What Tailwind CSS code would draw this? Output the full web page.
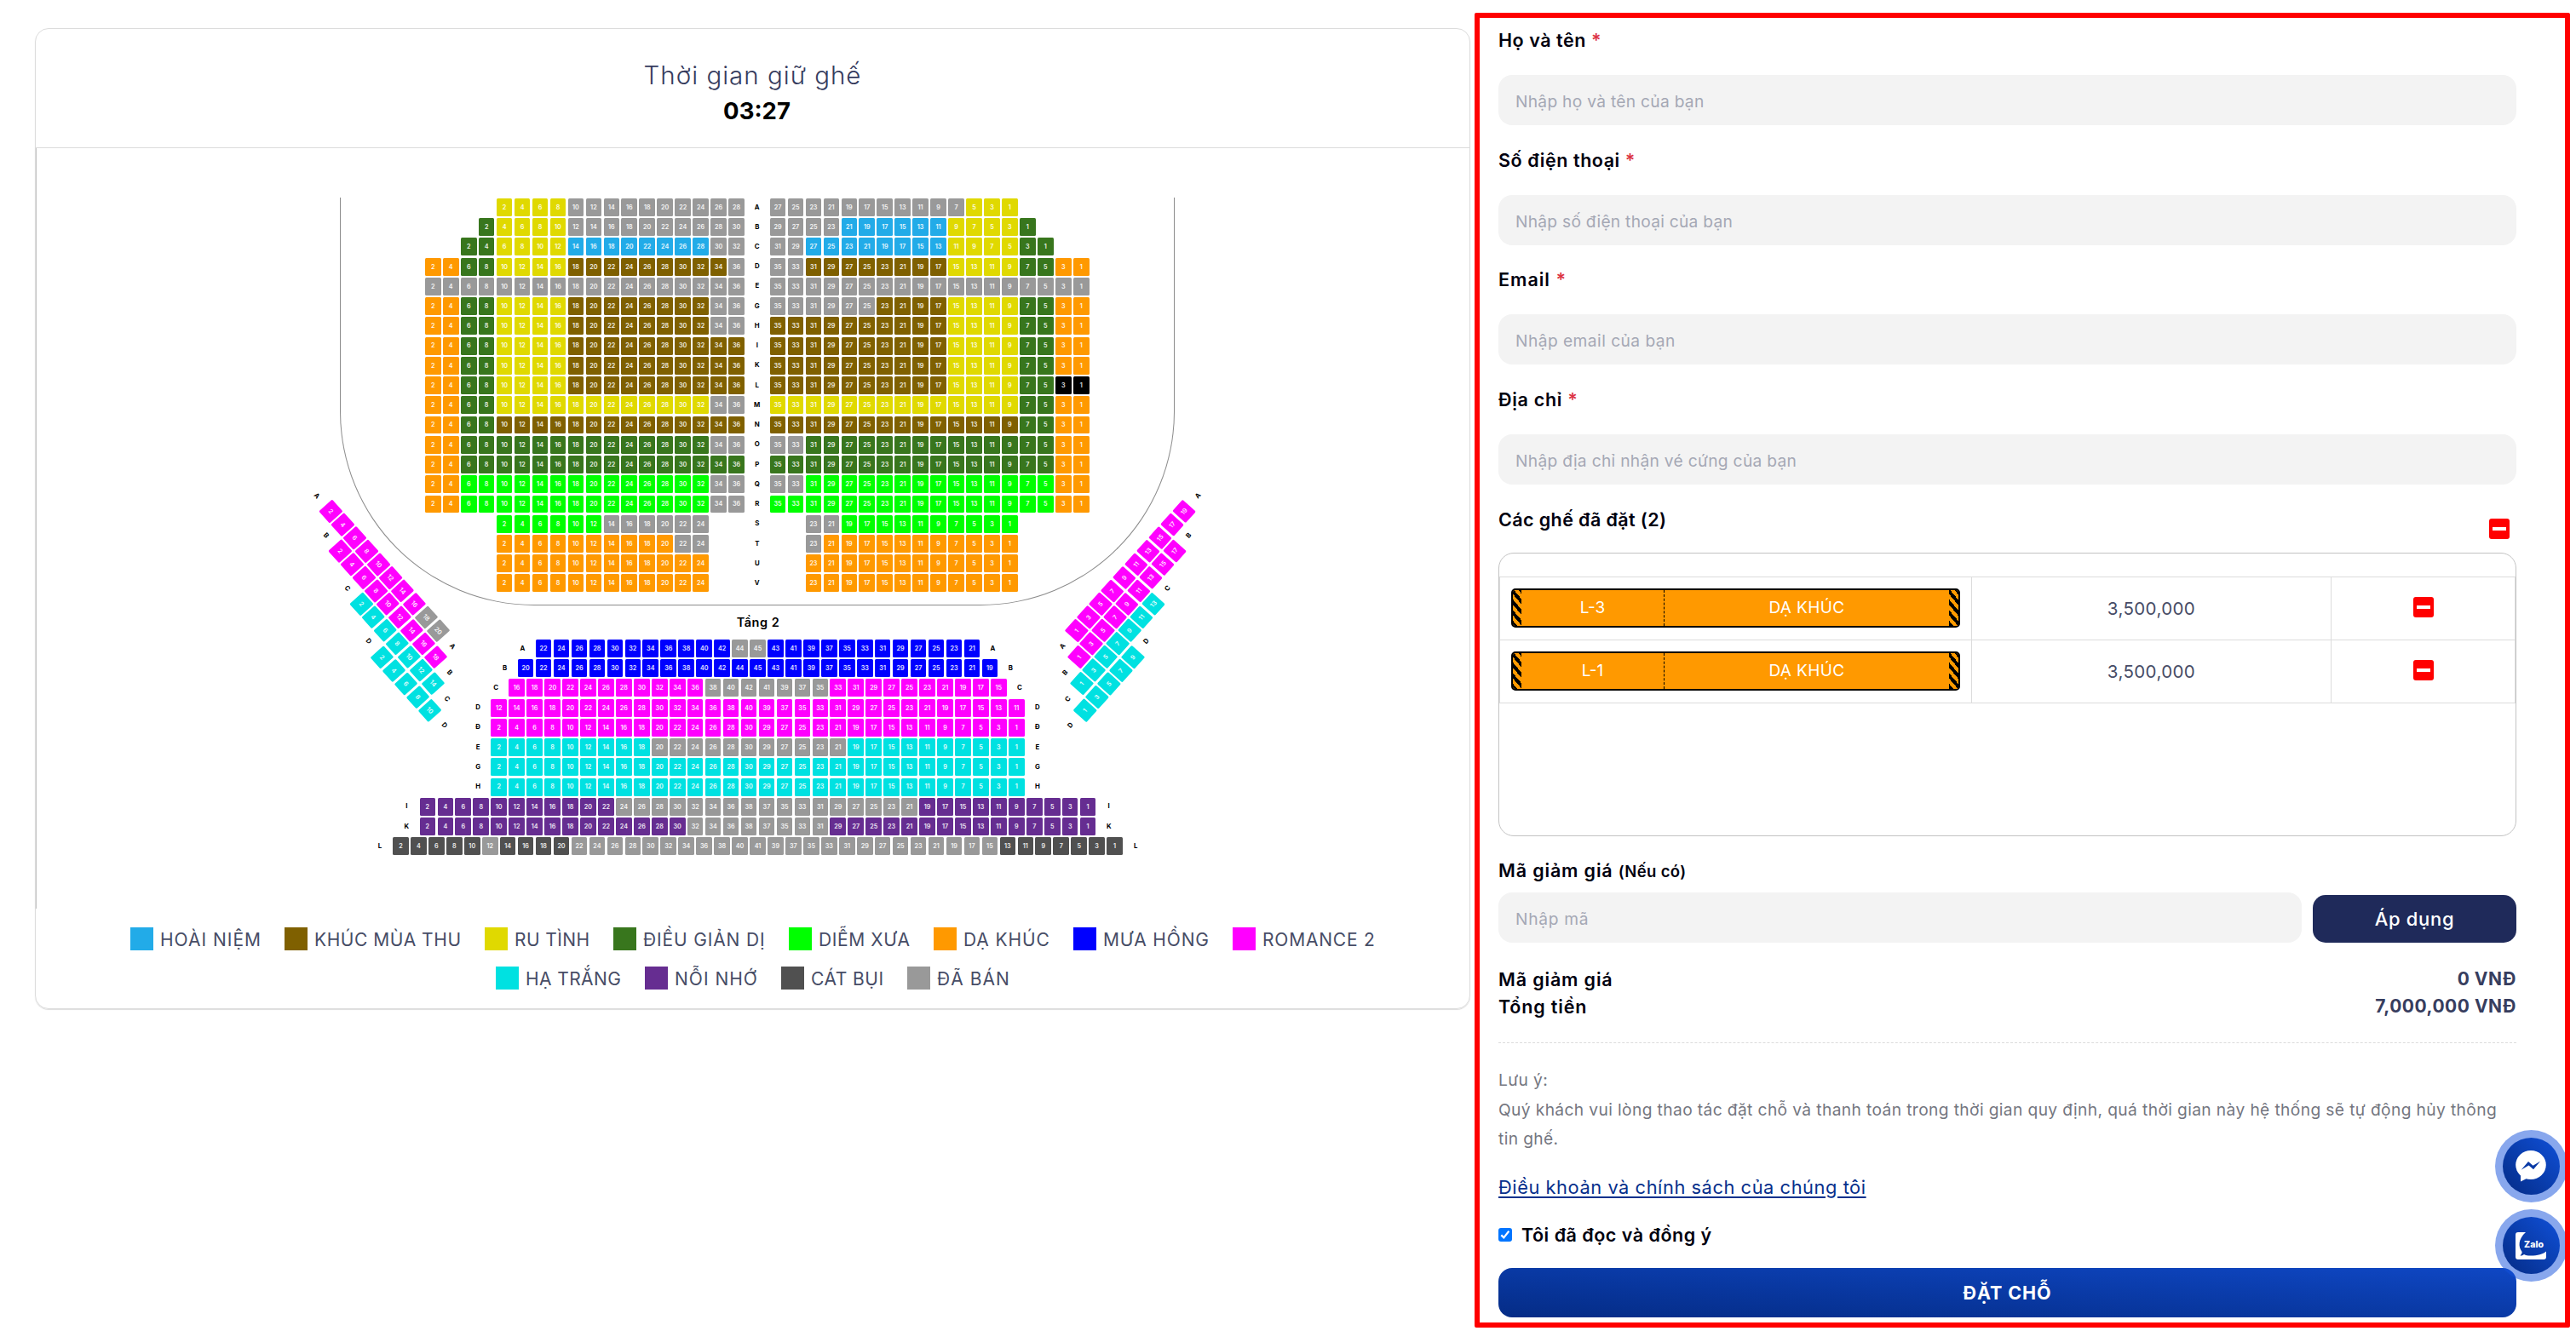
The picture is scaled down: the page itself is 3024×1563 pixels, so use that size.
<!DOCTYPE html>
<html lang="vi">
<head>
    <meta charset="UTF-8">
    <meta name="viewport" content="width=device-width, initial-scale=1.0">
    <title>Đặt chỗ</title>
    <script src="https://cdn.jsdelivr.net/npm/@tailwindcss/browser@4"></script>
</head>
<body class="relative flex h-[1563px] w-[3024px] items-start overflow-hidden bg-white font-['Inter','Noto_Sans',sans-serif] text-[#00000f]">

    <!-- Seat map card -->
    <section class="mt-[33px] ml-[41px] flex h-[1152px] w-[1685px] flex-col rounded-[16px] border border-[#dcdcdc] shadow-[0_1px_1px_#ddd]">
        <header class="flex h-[140px] flex-col items-center border-b border-[#dcdcdc] pt-[35px]">
            <h1 class="text-[29.5px] leading-[38px] font-light tracking-[1.02px] text-[#363c5e]">Thời gian giữ ghế</h1>
            <p class="mt-[4px] pl-[10px] text-[27.5px] leading-[38px] font-bold text-black">03:27</p>
        </header>

        <div id="seatMap" class="relative h-[893px] border-l border-[#c4c4c4]">
            <div class="absolute top-[58px] left-[356px] h-[479px] w-[980px] rounded-b-[228px] border border-t-0 border-[#8c8c8c]"></div>
            <div id="floor1" class="absolute top-[59px] left-[456px] flex flex-col gap-[2.35px]"></div>
            <div class="absolute top-[547px] left-[747px] w-[200px] text-center text-[14.5px] leading-[20px] font-semibold tracking-[0.5px] text-black">Tầng 2</div>
            <div id="floor2" class="absolute top-[577px] left-[346.5px] flex w-[1000px] flex-col items-center gap-[2.35px]"></div>
            <div id="wingLeft" class="absolute top-[416px] left-[308px] flex origin-[37.4px_10.4px] rotate-[48deg] flex-col gap-[2.35px]"></div>
            <div id="wingRight" class="absolute top-[416px] right-[298px] flex origin-[calc(100%-37.4px)_10.4px] rotate-[-48deg] flex-col items-end gap-[2.35px]"></div>
        </div>

        <!-- Legend -->
        <div class="mt-[22px] flex flex-col items-center gap-[19px] text-[21px] leading-[29px] whitespace-nowrap text-[#474d66]">
            <div class="flex h-[27px] gap-[28px]">
                <div class="flex gap-[8px]"><i class="size-[27px] bg-[#22abe8]"></i><span class="w-[118px] tracking-[1px]">HOÀI NIỆM</span></div>
                <div class="flex gap-[8px]"><i class="size-[27px] bg-[#7f6000]"></i><span class="w-[172px] tracking-[0.55px]">KHÚC MÙA THU</span></div>
                <div class="flex gap-[8px]"><i class="size-[27px] bg-[#e0d900]"></i><span class="w-[88px] tracking-[0.4px]">RU TÌNH</span></div>
                <div class="flex gap-[8px]"><i class="size-[27px] bg-[#38761d]"></i><span class="w-[143px] tracking-[0.85px]">ĐIỀU GIẢN DỊ</span></div>
                <div class="flex gap-[8px]"><i class="size-[27px] bg-[#00ff00]"></i><span class="w-[107px] tracking-[0.6px]">DIỄM XƯA</span></div>
                <div class="flex gap-[8px]"><i class="size-[27px] bg-[#ff9900]"></i><span class="w-[101px] tracking-[0.9px]">DẠ KHÚC</span></div>
                <div class="flex gap-[8px]"><i class="size-[27px] bg-[#0000ff]"></i><span class="w-[124px] tracking-[0.85px]">MƯA HỒNG</span></div>
                <div class="flex gap-[8px]"><i class="size-[27px] bg-[#ff00ff]"></i><span class="w-[132px] tracking-[0.8px]">ROMANCE 2</span></div>
            </div>
            <div class="flex h-[27px] gap-[28px]">
                <div class="flex gap-[8px]"><i class="size-[27px] bg-[#00e1e1]"></i><span class="w-[112px] tracking-[0.4px]">HẠ TRẮNG</span></div>
                <div class="flex gap-[8px]"><i class="size-[27px] bg-[#662d91]"></i><span class="w-[97px] tracking-[1px]">NỖI NHỚ</span></div>
                <div class="flex gap-[8px]"><i class="size-[27px] bg-[#505050]"></i><span class="w-[85px] tracking-[0.5px]">CÁT BỤI</span></div>
                <div class="flex gap-[8px]"><i class="size-[27px] bg-[#999999]"></i><span class="w-[85px] tracking-[1.05px]">ĐÃ BÁN</span></div>
            </div>
        </div>
    </section>

    <!-- Booking form -->
    <form class="mt-[35px] ml-[33px] w-[1195px] text-[21.5px] leading-[24px] tracking-[0.55px]">
        <div class="h-[140.67px]">
            <label class="block h-[24px] font-semibold">Họ và tên <span class="text-[#dc3545]">*</span></label>
            <input class="mt-[29px] h-[59px] w-full rounded-[16px] bg-[#f3f3f3] px-[20px] pt-[3px] text-[19.2px] tracking-[0.28px] placeholder:text-[#a5a8b5]" placeholder="Nhập họ và tên của bạn">
        </div>
        <div class="h-[140.67px]">
            <label class="block h-[24px] font-semibold">Số điện thoại <span class="text-[#dc3545]">*</span></label>
            <input class="mt-[29px] h-[59px] w-full rounded-[16px] bg-[#f3f3f3] px-[20px] pt-[3px] text-[19.2px] tracking-[0.26px] placeholder:text-[#a5a8b5]" placeholder="Nhập số điện thoại của bạn">
        </div>
        <div class="h-[140.67px]">
            <label class="block h-[24px] font-semibold tracking-[1px]">Email <span class="text-[#dc3545]">*</span></label>
            <input class="mt-[29px] h-[59px] w-full rounded-[16px] bg-[#f3f3f3] px-[20px] pt-[3px] text-[19.2px] tracking-[0.45px] placeholder:text-[#a5a8b5]" placeholder="Nhập email của bạn">
        </div>
        <div class="h-[140.67px]">
            <label class="block h-[24px] font-semibold tracking-[0.7px]">Địa chỉ <span class="text-[#dc3545]">*</span></label>
            <input class="mt-[29px] h-[59px] w-full rounded-[16px] bg-[#f3f3f3] px-[20px] pt-[3px] text-[19.2px] tracking-[0.3px] placeholder:text-[#a5a8b5]" placeholder="Nhập địa chỉ nhận vé cứng của bạn">
        </div>

        <!-- Selected seats -->
        <div class="flex h-[51px] justify-between">
            <span class="font-semibold tracking-[0.4px]">Các ghế đã đặt (2)</span>
            <button type="button" class="mt-[11px] mr-[8px] flex h-[24px] w-[24px] items-center justify-center rounded-[3px] bg-[#ff0000]"><i class="h-[4px] w-[16px] bg-white"></i></button>
        </div>
        <div class="h-[333px] rounded-[18px] border border-[#c3c3c3] pt-[27px]">
            <div class="grid h-[75px] grid-cols-[555px_422px_1fr] border-y border-[#dcdcdc]">
                <div class="flex items-center border-x border-[#dcdcdc] pl-[13px]">
                    <div class="flex h-[46px] w-[527px] overflow-hidden rounded-[5px] border-2 border-black bg-[#ff9900] text-[19px] tracking-[0.4px] text-white">
                        <i class="w-[10px] bg-[repeating-linear-gradient(50deg,#000_0_4px,#ff9900_4px_8px)]"></i>
                        <span class="flex w-[168px] items-center justify-center border-r border-dashed border-black tracking-normal">L-3</span>
                        <span class="flex flex-1 items-center justify-center">DẠ KHÚC</span>
                        <i class="w-[11px] bg-[repeating-linear-gradient(50deg,#000_0_4px,#ff9900_4px_8px)]"></i>
                    </div>
                </div>
                <div class="flex items-center justify-center border-r border-[#dcdcdc] pt-[2px] text-[20.5px] tracking-[0.4px] text-[#474c66]">3,500,000</div>
                <div class="flex items-center justify-center border-r border-[#dcdcdc] pb-[2px]"><button type="button" class="flex h-[24px] w-[24px] items-center justify-center rounded-[3px] bg-[#ff0000]"><i class="h-[4px] w-[16px] bg-white"></i></button></div>
            </div>
            <div class="grid h-[74px] grid-cols-[555px_422px_1fr] border-b border-[#dcdcdc]">
                <div class="flex items-center border-x border-[#dcdcdc] pl-[13px]">
                    <div class="flex h-[46px] w-[527px] overflow-hidden rounded-[5px] border-2 border-black bg-[#ff9900] text-[19px] tracking-[0.4px] text-white">
                        <i class="w-[10px] bg-[repeating-linear-gradient(50deg,#000_0_4px,#ff9900_4px_8px)]"></i>
                        <span class="flex w-[168px] items-center justify-center border-r border-dashed border-black tracking-normal">L-1</span>
                        <span class="flex flex-1 items-center justify-center">DẠ KHÚC</span>
                        <i class="w-[11px] bg-[repeating-linear-gradient(50deg,#000_0_4px,#ff9900_4px_8px)]"></i>
                    </div>
                </div>
                <div class="flex items-center justify-center border-r border-[#dcdcdc] pt-[2px] text-[20.5px] tracking-[0.4px] text-[#474c66]">3,500,000</div>
                <div class="flex items-center justify-center border-r border-[#dcdcdc] pb-[2px]"><button type="button" class="flex h-[24px] w-[24px] items-center justify-center rounded-[3px] bg-[#ff0000]"><i class="h-[4px] w-[16px] bg-white"></i></button></div>
            </div>
        </div>

        <!-- Voucher -->
        <div class="mt-[28.5px] h-[24px] font-semibold tracking-[0.85px]">Mã giảm giá <span class="text-[18.5px] tracking-[0.35px]">(Nếu có)</span></div>
        <div class="mt-[13.5px] flex h-[59px] items-end justify-between">
            <input class="h-[59px] w-[943px] rounded-[16px] bg-[#f3f3f3] px-[20px] pt-[3px] text-[19.2px] tracking-[0.7px] placeholder:text-[#a5a8b5]" placeholder="Nhập mã">
            <button type="button" class="h-[56px] w-[239px] rounded-[15px] bg-[#1f2a5a] text-[22px] font-medium tracking-[0.7px] text-white">Áp dụng</button>
        </div>

        <div class="mt-[27px] flex h-[91px] justify-between border-b border-dashed border-[#dcdcdc] leading-[32px] font-semibold">
            <div class="flex flex-col tracking-[0.85px]"><span>Mã giảm giá</span><span>Tổng tiền</span></div>
            <div class="flex flex-col items-end text-[21px] font-bold tracking-[0.5px] text-[#373d5e]"><span>0 VNĐ</span><span>7,000,000 VNĐ</span></div>
        </div>

        <p class="mt-[26.5px] text-[19.2px] leading-[34.5px] tracking-[0.38px] whitespace-nowrap text-[#74767f]">Lưu ý:<br>Quý khách vui lòng thao tác đặt chỗ và thanh toán trong thời gian quy định, quá thời gian này hệ thống sẽ tự động hủy thông<br>tin ghế.</p>
        <a class="mt-[27px] block h-[24px] text-[21.8px] tracking-[0.57px] text-[#06308c] underline decoration-2 underline-offset-[3px]">Điều khoản và chính sách của chúng tôi</a>
        <label class="mt-[32px] flex h-[24px] items-center font-semibold tracking-[0.5px]">
            <svg class="mr-[11px] size-[16px]" viewBox="0 0 16 16"><rect width="16" height="16" rx="3" fill="#0075ff"/><path d="M3.3 8.4l3 3 6-7.6" fill="none" stroke="#fff" stroke-width="2.2"/></svg>
            Tôi đã đọc và đồng ý
        </label>
        <button type="button" class="mt-[27px] h-[58px] w-full rounded-[16px] bg-linear-to-tr from-[#052c86] to-[#0f47c4] pt-[1px] font-bold tracking-[0.9px] text-white">ĐẶT CHỖ</button>
    </form>

    <!-- Floating contact buttons -->
    <div class="absolute top-[1326.5px] left-[2928.5px] flex flex-col gap-[8.5px]">
        <a class="flex size-[85px] items-center justify-center rounded-full bg-[#114fdc]/50">
            <span class="flex size-[67px] items-center justify-center rounded-full bg-linear-to-tr from-[#052c86] to-[#1050d8]">
                <svg class="h-[37px] w-[36px]" viewBox="0 0 36 37"><ellipse cx="18" cy="17" rx="17.8" ry="17" fill="#fff"/><path d="M6 26v10.500l8-4z" fill="#fff"/><path d="M6.700 22.700L15 12.900l5.500 4.800L29 12.700l-8 9.500-5.500-4.700z" fill="#0a3aa6"/></svg>
            </span>
        </a>
        <a class="flex size-[85px] items-center justify-center rounded-full bg-[#114fdc]/50">
            <span class="flex size-[67px] items-center justify-center rounded-full bg-linear-to-tr from-[#052c86] to-[#1050d8]">
                <svg class="h-[32px] w-[36px]" viewBox="0 0 36 32"><path d="M12 0H3Q0 0 0 3v26q0 3 3 3h30q3 0 3-3v-6.500c-4 3.500-10 5-18 5-4 0-6-.5-8-1.500-2 1.500-3.500 1.600-4.500 1.400C7 26 7.800 24.500 7.600 23 3 17 3 8 12 0z" fill="#fff"/><text x="10" y="17.500" textLength="23" font-size="10.500" font-weight="800" fill="#fff">Zalo</text></svg>
            </span>
        </a>
    </div>

    <!-- Highlight frame -->
    <div class="pointer-events-none absolute top-[15px] left-[1731px] h-[1544px] w-[1286px] rounded-[2px] border-6 border-[#ff0000]"></div>

    <script>
        const colors = {
            o: 'bg-[#ff9900]', g: 'bg-[#38761d]', y: 'bg-[#e0d900]', x: 'bg-[#999999]',
            b: 'bg-[#22abe8]', n: 'bg-[#7f6000]', l: 'bg-[#00ff00]', m: 'bg-[#ff00ff]',
            c: 'bg-[#00e1e1]', p: 'bg-[#662d91]', d: 'bg-[#505050]', u: 'bg-[#0000ff]',
            k: 'bg-black', _: 'invisible'
        };

        // "y4 x10" -> 4 yellow seats then 10 grey ones, numbered from start by step
        function seats(runs, start, step) {
            let n = start;
            return runs.split(' ').filter(Boolean).map(run => {
                let out = '';
                for (let i = 0; i < +run.slice(1); i++) {
                    const text = run[0] === '_' ? '' : n;
                    if (run[0] !== '_') n += step;
                    out += `<b class="flex h-[20.9px] w-[18.6px] shrink-0 items-center justify-center rounded-[1.5px] text-[7.2px] leading-none font-semibold text-white/90 ${colors[run[0]]}">${text}</b>`;
                }
                return out;
            }).join('');
        }

        function label(text, width) {
            return `<b class="flex ${width} h-[20.9px] shrink-0 items-center justify-center text-[7.8px] leading-none font-bold text-black">${text}</b>`;
        }

        function row(html) {
            return `<div class="flex gap-[2.37px]">${html}</div>`;
        }

        const floor1 = [
            ['A', '_4 y4 x10', 'x11 y3', 27],
            ['B', '_3 g1 y4 x10', 'x4 b6 y4 g1', 29],
            ['C', '_2 g2 y4 b8 x2', 'x2 b8 y4 g2', 31],
            ['D', 'o2 g2 y4 n9 x1', 'x2 n8 y4 g2 o2', 35],
            ['E', 'x18', 'x18', 35],
            ['G', 'o2 g2 y4 n8 x2', 'x6 n4 y4 g2 o2', 35],
            ['H', 'o2 g2 y4 n8 x2', 'n10 y4 g2 o2', 35],
            ['I', 'o2 g2 y4 n10', 'n10 y4 g2 o2', 35],
            ['K', 'o2 g2 y4 n10', 'n10 y4 g2 o2', 35],
            ['L', 'o2 g2 y4 n10', 'n10 y4 g2 k2', 35],
            ['M', 'o2 g2 y12 x2', 'y14 g2 o2', 35],
            ['N', 'o2 g2 n14', 'n14 g2 o2', 35],
            ['O', 'o2 g14 x2', 'x2 g14 o2', 35],
            ['P', 'o2 g16', 'g16 o2', 35],
            ['Q', 'o2 l14 x2', 'x2 l14 o2', 35],
            ['R', 'o2 l14 x2', 'l16 o2', 35],
            ['S', '_4 l6 x6 _2', '_2 x2 l10', 23],
            ['T', '_4 o10 x2 _2', '_2 x1 o11', 23],
            ['U', '_4 o12 _2', '_2 o12', 23],
            ['V', '_4 o12 _2', '_2 o12', 23]
        ];

        const floor2 = [
            ['A', 'u11 x1', 22, 'x1 u12', 45],
            ['B', 'u13', 20, 'u14', 45],
            ['C', 'm11 x3', 16, 'x4 m10', 41],
            ['D', 'm15', 12, 'm15', 39],
            ['Đ', 'm15', 2, 'm15', 29],
            ['E', 'c9 x6', 2, 'x5 c10', 29],
            ['G', 'c15', 2, 'c15', 29],
            ['H', 'c15', 2, 'c15', 29],
            ['I', 'p11 x8', 2, 'x9 p10', 37],
            ['K', 'p15 x4', 2, 'x4 p15', 37],
            ['L', 'd5 x1 d4 x10', 2, 'x14 d7', 41]
        ];

        const wings = [
            ['A', '', 'm8 x2', 'm10'],
            ['B', '_2', 'm9', 'm9'],
            ['C', '_5', 'c7', 'c7'],
            ['D', '_8', 'c5', 'c5']
        ];

        document.getElementById('floor1').innerHTML = floor1.map(([name, left, right, start]) =>
            row(seats(left, 2, 2) + label(name, 'w-[25.2px]') + seats(right, start, -2))).join('');

        document.getElementById('floor2').innerHTML = floor2.map(([name, left, first, right, start]) =>
            row(label(name, 'w-[25.8px]') + seats(left, first, 2) + seats(right, start, -2) + label(name, 'w-[25.8px]'))).join('');

        document.getElementById('wingLeft').innerHTML = wings.map(([name, skip, left]) =>
            row(seats(skip, 0, 0) + label(name, 'w-[25.8px]') + seats(left, 2, 2) + label(name, 'w-[25.8px]'))).join('');

        // the right wing reads from 1 up to the highest seat
        document.getElementById('wingRight').innerHTML = wings.map(([name, skip, , right]) =>
            row(label(name, 'w-[25.8px]') + seats(right, 1, 2) + label(name, 'w-[25.8px]') + seats(skip, 0, 0))).join('');
    </script>
</body>
</html>
